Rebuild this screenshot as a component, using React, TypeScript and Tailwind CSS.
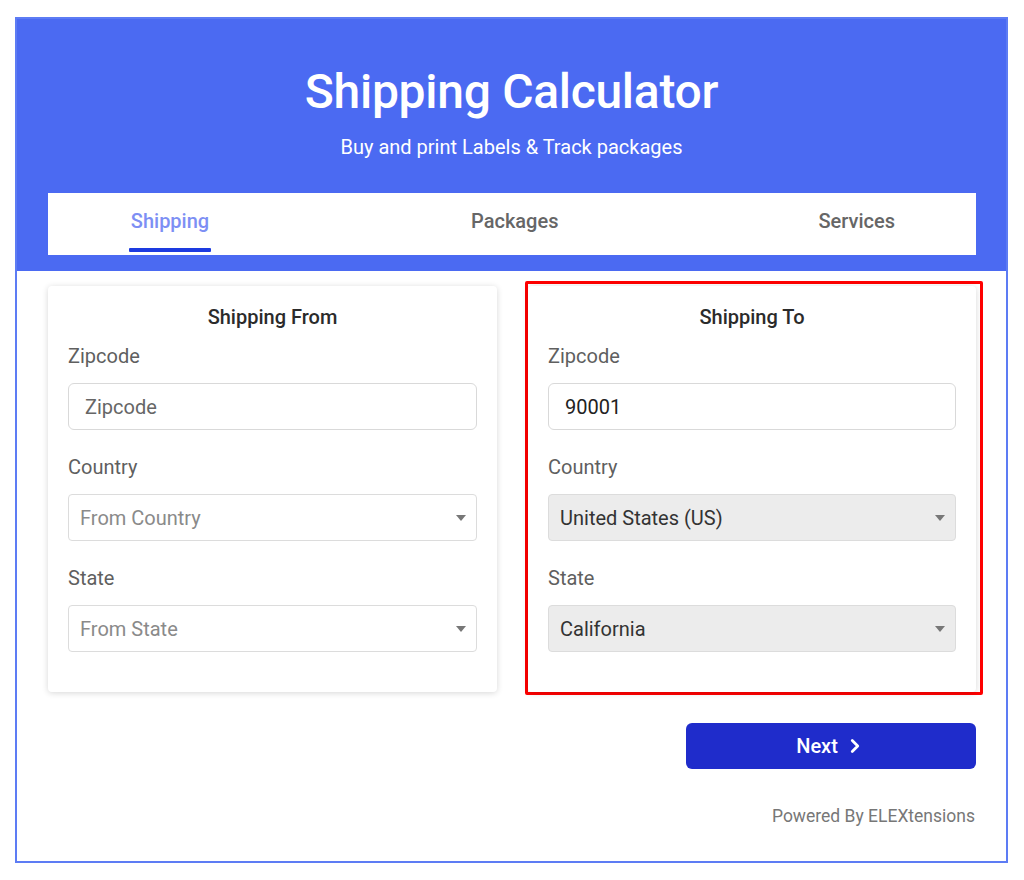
import { ChevronRight } from "lucide-react";

function Caret() {
    return (
        <svg width="10" height="6" viewBox="0 0 10 6" className="text-[#777]">
            <path d="M0 0 L10 0 L5 6 Z" fill="currentColor" />
        </svg>
    );
}

type Field =
    | { kind: "input"; label: string; value: string; placeholder?: boolean }
    | { kind: "select"; label: string; value: string; filled: boolean };

function AddressCard({ title, fields }: { title: string; fields: Field[] }) {
    return (
        <div className="bg-white rounded-[4px] shadow-[0_1px_6px_rgba(0,0,0,0.16)] px-5 pt-[19px] pb-[40px]">
            <h3 className="text-center text-[20px] leading-6 font-medium text-[#2b2b2b]">{title}</h3>
            <div className="flex flex-col gap-[25px] mt-[15px]">
                {fields.map((f) => (
                    <div key={f.label}>
                        <div className="text-[20px] leading-6 text-[#5f5f5f] mb-[15px]">{f.label}</div>
                        {f.kind === "input" ? (
                            <div className="h-[47px] rounded-[6px] border border-[#d9d9d9] flex items-center px-4">
                                <span className={`text-[20px] ${f.placeholder ? "text-[#666]" : "text-[#222]"}`}>{f.value}</span>
                            </div>
                        ) : (
                            <div
                                className={`h-[47px] rounded-[4px] border border-[#dcdcdc] flex items-center justify-between pl-[11px] pr-[10px] ${
                                    f.filled ? "bg-[#ececec]" : "bg-white"
                                }`}
                            >
                                <span className={`text-[20px] ${f.filled ? "text-[#333]" : "text-[#8a8a8a]"}`}>{f.value}</span>
                                <Caret />
                            </div>
                        )}
                    </div>
                ))}
            </div>
        </div>
    );
}

export default function App() {
    const tabs = ["Shipping", "Packages", "Services"];

    return (
        <div className="w-[1024px] h-[880px] bg-white pt-[17px] pl-[15px] font-['Roboto',sans-serif]">
            <div className="w-[993px] h-[846px] border-2 border-[#5d7cf4] flex flex-col">
                {/* header */}
                <div className="bg-[#4b6af2] pt-[45px] pb-4 flex flex-col items-center">
                    <h1 className="text-[48px] leading-[56px] font-medium text-white tracking-[-0.3px]">Shipping Calculator</h1>
                    <p className="text-[20px] leading-6 text-white mt-[15px]">Buy and print Labels &amp; Track packages</p>

                    <div className="self-stretch ml-[31px] mr-[30px] mt-[34px] h-[62px] bg-white flex justify-between px-[81px]">
                        {tabs.map((t, i) => (
                            <div key={t} className="flex flex-col items-center pt-4">
                                <span className={`text-[20px] leading-6 font-medium ${i === 0 ? "text-[#7d8ff4]" : "text-[#666]"}`}>{t}</span>
                                {i === 0 && <div className="mt-[15px] h-[4px] w-[82px] bg-[#1d3be0] rounded-[1px]" />}
                            </div>
                        ))}
                    </div>
                </div>

                {/* body */}
                <div className="flex items-start pl-[31px] pt-[10px] gap-[28px]">
                    <div className="w-[449px] mt-[5px]">
                        <AddressCard
                            title="Shipping From"
                            fields={[
                                { kind: "input", label: "Zipcode", value: "Zipcode", placeholder: true },
                                { kind: "select", label: "Country", value: "From Country", filled: false },
                                { kind: "select", label: "State", value: "From State", filled: false },
                            ]}
                        />
                    </div>
                    <div className="w-[458px] border-[3px] border-[#ff0000] rounded-[2px] pt-[2px] pr-[4px]">
                        <AddressCard
                            title="Shipping To"
                            fields={[
                                { kind: "input", label: "Zipcode", value: "90001" },
                                { kind: "select", label: "Country", value: "United States (US)", filled: true },
                                { kind: "select", label: "State", value: "California", filled: true },
                            ]}
                        />
                    </div>
                </div>

                <div className="flex justify-end pr-[30px] mt-[28px]">
                    <button className="w-[290px] h-[46px] rounded-[6px] bg-[#1f2ccb] text-white text-[20px] font-medium flex items-center justify-center gap-[6px]">
                        Next
                        <ChevronRight size={22} strokeWidth={3} />
                    </button>
                </div>

                <div className="flex justify-end pr-[31px] mt-[37px]">
                    <span className="text-[17.5px] leading-5 text-[#777]">Powered By ELEXtensions</span>
                </div>
            </div>
        </div>
    );
}
